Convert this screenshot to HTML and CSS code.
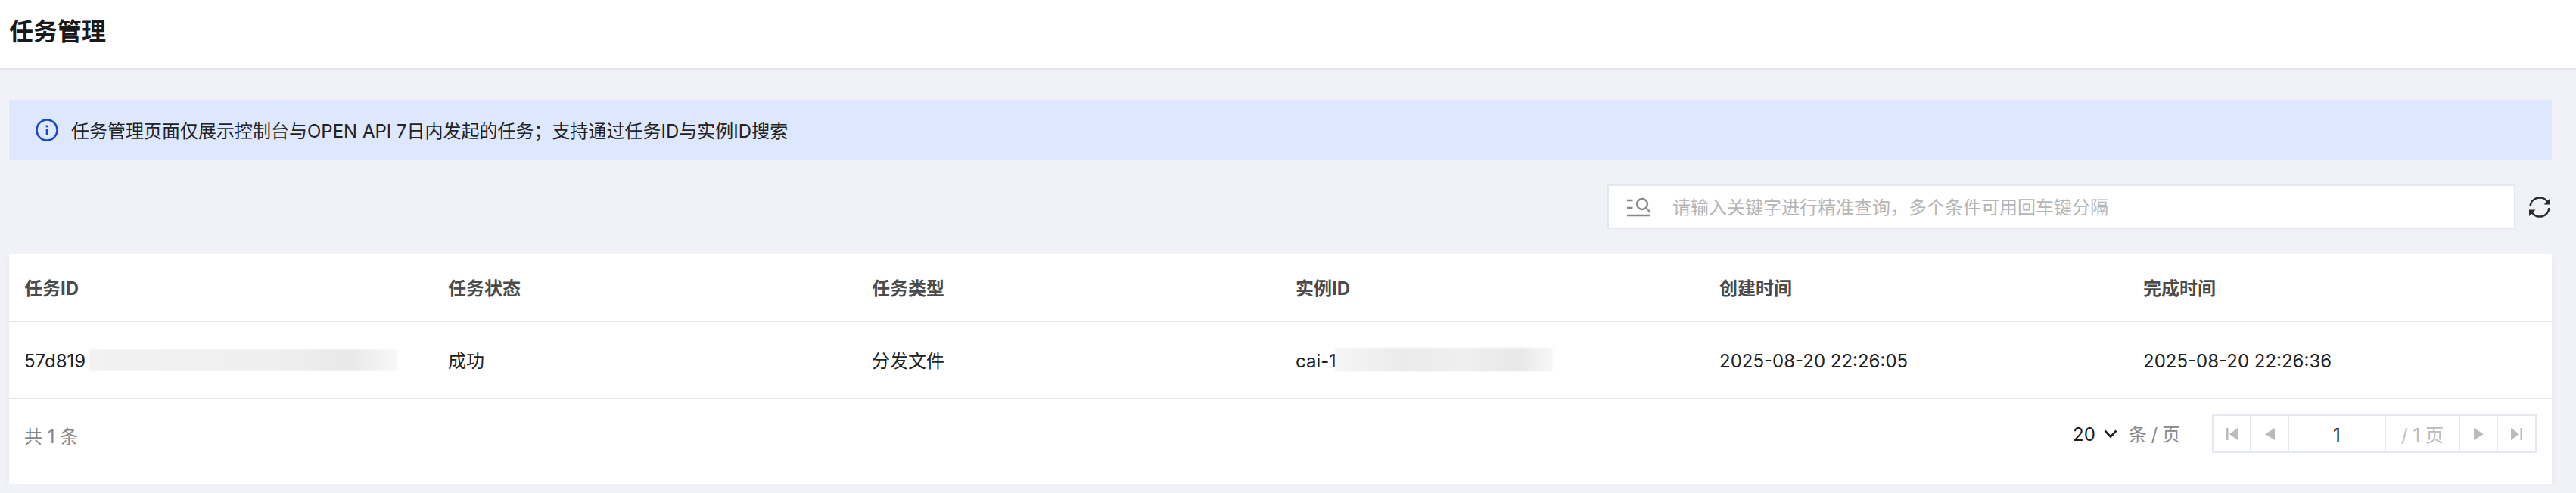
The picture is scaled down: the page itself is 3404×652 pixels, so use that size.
FILE: index.html
```html
<!DOCTYPE html>
<html lang="zh-CN">
<head>
<meta charset="utf-8">
<title>任务管理</title>
<link rel="stylesheet" href="styles.css">
</head>
<body>
<header class="page-head"><h1 class="page-title">任务管理</h1></header>
<main class="content">
  <div class="notice">
    <svg class="notice-icon" viewBox="0 0 30 30" aria-hidden="true"><circle cx="15" cy="15" r="13.500" fill="none" stroke="#1a47c4" stroke-width="2.600"/><rect x="13.700" y="13" width="2.600" height="9" fill="#1a47c4"/><rect x="13.700" y="8.500" width="2.600" height="2.800" fill="#1a47c4"/></svg>
    <span>任务管理页面仅展示控制台与OPEN API 7日内发起的任务；支持通过任务ID与实例ID搜索</span>
  </div>
  <div class="toolbar">
    <div class="search">
      <svg class="search-icon" viewBox="0 0 32 26" aria-hidden="true"><path d="M0 4h7.500M0 14h7.500M0 24h30" fill="none" stroke="#888" stroke-width="2.400"/><circle cx="20" cy="9" r="7" fill="none" stroke="#888" stroke-width="2.400"/><path d="M25 14l6 6" fill="none" stroke="#888" stroke-width="2.400"/></svg>
      <span class="placeholder">请输入关键字进行精准查询，多个条件可用回车键分隔</span>
    </div>
    <svg class="refresh" viewBox="0 0 28 28" aria-hidden="true"><path d="M1.500 13A12.600 12.600 0 0 1 24.500 7M26.500 15A12.600 12.600 0 0 1 3.500 21" fill="none" stroke="#2b2b2b" stroke-width="2.600"/><path d="M28 2v8.500h-8.500zM0 26v-8.500h8.500z" fill="#2b2b2b"/></svg>
  </div>
  <section class="card">
    <div class="row row-head">
      <div class="cell">任务ID</div><div class="cell">任务状态</div><div class="cell">任务类型</div><div class="cell">实例ID</div><div class="cell">创建时间</div><div class="cell">完成时间</div>
    </div>
    <div class="row row-body">
      <div class="cell">57d819<span class="mask mask-id"></span></div><div class="cell">成功</div><div class="cell">分发文件</div><div class="cell">cai-1<span class="mask mask-inst"></span></div><div class="cell">2025-08-20 22:26:05</div><div class="cell">2025-08-20 22:26:36</div>
    </div>
    <footer class="foot">
      <span class="total">共 1 条</span>
      <div class="pager-group">
        <span class="size">20</span>
        <svg class="chev" viewBox="0 0 18 12" aria-hidden="true"><path d="M1.500 1.500L9 9.500l7.500-8" fill="none" stroke="#222" stroke-width="2.600"/></svg>
        <span class="per">条 / 页</span>
        <div class="pager">
          <div class="btn"><svg viewBox="0 0 15 16" class="tri tri-edge"><path d="M0 0h2.500v16H0zM15 0v16L4 8z" fill="#bbb"/></svg></div>
          <div class="btn"><svg viewBox="0 0 13 16" class="tri tri-step"><path d="M13 0v16L0 8z" fill="#bbb"/></svg></div>
          <div class="page-num">1</div>
          <div class="page-total">/ 1 页</div>
          <div class="btn"><svg viewBox="0 0 13 16" class="tri tri-step"><path d="M0 0v16l13-8z" fill="#bbb"/></svg></div>
          <div class="btn"><svg viewBox="0 0 15 16" class="tri tri-edge"><path d="M12.500 0H15v16h-2.500zM0 0v16l11-8z" fill="#bbb"/></svg></div>
        </div>
      </div>
    </footer>
  </section>
</main>
</body>
</html>
```
FILE: styles.css
```css
* { box-sizing: border-box; }
html, body { margin: 0; padding: 0; }
body {
  background: #f0f2f7;
  color: #1c1c1c;
  font-family: Inter, "Noto Sans CJK SC", sans-serif;
  font-size: 24px;
  line-height: 32px;
}
.page-head {
  height: 92px;
  background: #fff;
  border-bottom: 2px solid #e3e6ee;
  padding: 22px 12px 0;
}
.page-title {
  margin: 0;
  font-size: 32px;
  line-height: 40px;
  font-weight: 700;
  color: #1a1a1a;
}
.content { padding: 40px 32px 0 12px; }
.notice {
  height: 80px;
  background: #dde8fe;
  display: flex;
  align-items: center;
  gap: 17px;
  padding-left: 35px;
  color: #222;
}
.notice-icon { width: 30px; height: 30px; display: block; }
.notice span { padding-top: 3px; }
.toolbar {
  margin-top: 32px;
  display: flex;
  justify-content: flex-end;
  align-items: center;
  gap: 18px;
}
.search {
  width: 1200px;
  height: 59px;
  background: #fff;
  border: 2px solid #e3e8ee;
  display: flex;
  align-items: center;
  padding-left: 24px;
}
.search-icon { width: 32px; height: 26px; display: block; flex: none; }
.placeholder { color: #b5b5b5; margin-left: 28px; padding-top: 3px; }
.refresh { width: 28px; height: 28px; display: block; margin-right: 2px; }
.card {
  margin-top: 33px;
  background: #fff;
  box-shadow: 0 4px 10px rgba(54, 58, 80, 0.05);
}
.row {
  display: grid;
  grid-template-columns: repeat(6, 1fr);
  align-items: center;
  border-bottom: 2px solid #e3e8ee;
}
.cell { padding-left: 20px; white-space: nowrap; position: relative; }
.row-head { height: 90px; font-weight: 700; color: #4b4b4b; padding-top: 4px; }
.row-body { height: 102px; color: #222; padding-top: 4px; }
.mask {
  position: absolute;
  filter: blur(1px);
}
.mask-id { left: 105px; top: 0; width: 409px; height: 28px; background: linear-gradient(90deg, #f2f2f2, #efefef 60%, #e9e9e9 85%, #f8f8f8); }
.mask-inst { left: 72px; top: -2px; width: 288px; height: 31px; background: linear-gradient(90deg, #f6f6f6, #ebebeb 30%, #efefef 60%, #e8e8e8 85%, #f8f8f8); }
.foot {
  height: 112px;
  display: flex;
  align-items: flex-start;
  justify-content: space-between;
  padding: 20px 20px 0;
}
.total { color: #888; margin-top: 14px; }
.pager-group { display: flex; align-items: center; }
.size { padding-top: 3px; }
.chev { width: 18px; height: 12px; margin-left: 11px; display: block; }
.per { color: #888; margin-left: 15px; padding-top: 3px; word-spacing: -1px; }
.pager {
  margin-left: 42px;
  height: 51px;
  display: flex;
  border: 2px solid #e3e8ee;
}
.btn {
  width: 50px;
  display: flex;
  align-items: center;
  justify-content: center;
  border-right: 2px solid #e3e8ee;
}
.btn:last-child { border-right: 0; width: 49px; }
.tri { height: 16px; display: block; }
.tri-edge { width: 15px; }
.tri-step { width: 13px; }
.page-num {
  width: 128px;
  text-align: center;
  line-height: 51px;
  border-right: 2px solid #e3e8ee;
}
.page-total {
  width: 98px;
  text-align: center;
  line-height: 51px;
  color: #bbb;
  border-right: 2px solid #e3e8ee;
}
```
